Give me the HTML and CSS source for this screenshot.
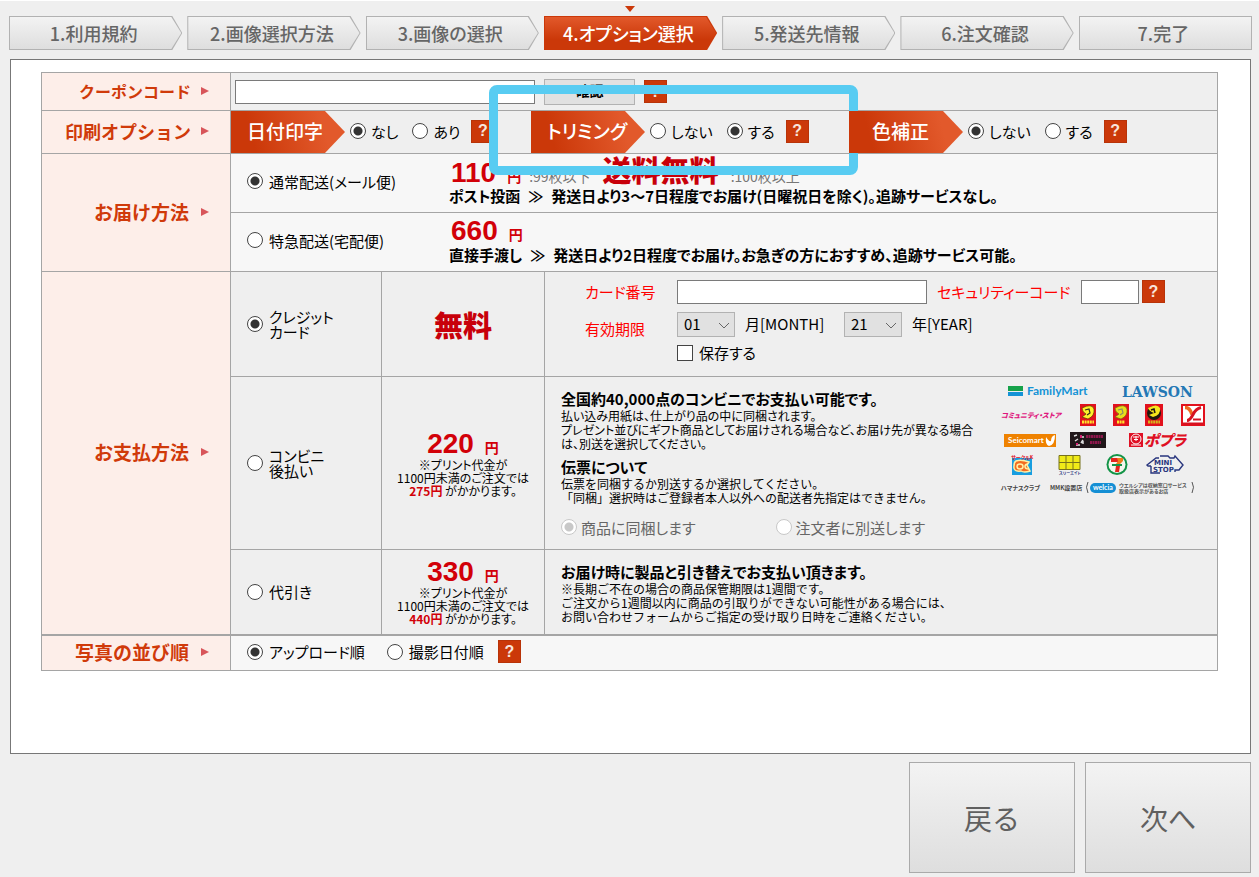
FILE: index.html
```html
<!DOCTYPE html>
<html lang="ja">
<head>
<meta charset="utf-8">
<title>オプション選択</title>
<link rel="stylesheet" href="styles.css">
</head>
<body>
<ol class="steps">
  <li class="step"><span>1.利用規約</span></li>
  <li class="step"><span>2.画像選択方法</span></li>
  <li class="step"><span>3.画像の選択</span></li>
  <li class="step-current"><svg class="marker" width="10" height="6" viewBox="0 0 10 6"><path d="M0 0H10L5 6Z"/></svg><div class="step active"><span>4.オプション選択</span></div></li>
  <li class="step"><span>5.発送先情報</span></li>
  <li class="step"><span>6.注文確認</span></li>
  <li class="step last"><span>7.完了</span></li>
</ol>

<form class="order">
<main class="panel">
<table class="options">
  <colgroup><col class="c-head"><col class="c-method"><col class="c-price"><col></colgroup>
  <tr class="r-coupon">
    <th scope="row"><div class="head small"><label for="coupon">クーポンコード</label><svg width="8" height="8" viewBox="0 0 8 8"><path d="M0 0L8 4L0 8Z"/></svg></div></th>
    <td colspan="3"><div class="coupon"><input type="text" class="field coupon-field" id="coupon"><button type="button" class="check">確認</button><button type="button" class="help">?</button></div></td>
  </tr>
  <tr class="r-print">
    <th scope="row"><div class="head medium">印刷オプション<svg width="8" height="8" viewBox="0 0 8 8"><path d="M0 0L8 4L0 8Z"/></svg></div></th>
    <td colspan="3"><div class="print">
      <div class="group"><span class="tag">日付印字</span>
        <label class="choice"><input type="radio" name="date" checked>なし</label>
        <label class="choice"><input type="radio" name="date">あり</label>
        <button type="button" class="help">?</button></div>
      <div class="group"><span class="tag">トリミング</span>
        <label class="choice"><input type="radio" name="trim">しない</label>
        <label class="choice"><input type="radio" name="trim" checked>する</label>
        <button type="button" class="help">?</button><div class="highlight"></div></div>
      <div class="group"><span class="tag short">色補正</span>
        <label class="choice"><input type="radio" name="color" checked>しない</label>
        <label class="choice"><input type="radio" name="color">する</label>
        <button type="button" class="help">?</button></div>
    </div></td>
  </tr>
  <tr class="r-ship light">
    <th scope="row" rowspan="2"><div class="head wide">お届け方法<svg width="8" height="8" viewBox="0 0 8 8"><path d="M0 0L8 4L0 8Z"/></svg></div></th>
    <td colspan="3"><div class="ship">
      <label class="choice"><input type="radio" name="ship" checked>通常配送(メール便)</label>
      <div class="ship-text">
        <p class="cost"><b class="num">110</b><b class="yen">円</b><span class="limit">:99枚以下</span><b class="free">送料無料</b><span class="limit">:100枚以上</span></p>
        <p class="term">ポスト投函<span class="arrows">≫</span>発送日より3～7日程度でお届け(日曜祝日を除く)。追跡サービスなし。</p>
      </div></div></td>
  </tr>
  <tr class="r-ship light">
    <td colspan="3"><div class="ship">
      <label class="choice"><input type="radio" name="ship">特急配送(宅配便)</label>
      <div class="ship-text">
        <p class="cost"><b class="num">660</b><b class="yen">円</b></p>
        <p class="term">直接手渡し<span class="arrows">≫</span>発送日より2日程度でお届け。お急ぎの方におすすめ、追跡サービス可能。</p>
      </div></div></td>
  </tr>
  <tr class="r-card">
    <th scope="row" rowspan="3"><div class="head wide">お支払方法<svg width="8" height="8" viewBox="0 0 8 8"><path d="M0 0L8 4L0 8Z"/></svg></div></th>
    <td class="method"><label class="choice"><input type="radio" name="pay" checked><span>クレジット<br>カード</span></label></td>
    <td class="price"><b class="free">無料</b></td>
    <td><div class="card">
      <label class="req" for="cardno">カード番号</label>
      <div class="line"><input type="text" class="field card-field" id="cardno"><label class="req code-label" for="code">セキュリティーコード</label><input type="text" class="field code-field" id="code"><button type="button" class="help">?</button></div>
      <span class="req expiry">有効期限</span>
      <div class="line dates">
        <span class="pick"><select id="month"><option>01</option></select><svg width="12" height="7" viewBox="0 0 12 7"><path d="M1 1L6 6L11 1"/></svg></span><label for="month" class="unit">月[MONTH]</label>
        <span class="pick"><select id="year"><option>21</option></select><svg width="12" height="7" viewBox="0 0 12 7"><path d="M1 1L6 6L11 1"/></svg></span><label for="year">年[YEAR]</label>
      </div>
      <label class="choice save"><input type="checkbox">保存する</label>
    </div></td>
  </tr>
  <tr class="r-store">
    <td class="method"><label class="choice"><input type="radio" name="pay"><span>コンビニ<br>後払い</span></label></td>
    <td class="price"><p><b class="num">220</b><b class="yen">円</b></p><p class="note">※プリント代金が<br>1100円未満のご注文では<br><b>275円</b> がかかります。</p></td>
    <td class="top"><div class="store">
      <div class="about">
        <h2>全国約40,000点のコンビニでお支払い可能です。</h2>
        <p>払い込み用紙は、仕上がり品の中に同梱されます。<br>プレゼント並びにギフト商品としてお届けされる場合など、お届け先が異なる場合は、別送を選択してください。</p>
        <h2>伝票について</h2>
        <p class="even">伝票を同梱するか別送するか選択してください。<br>「同梱」選択時はご登録者本人以外への配送者先指定はできません。</p>
        <div class="slip"><label class="choice"><input type="radio" name="slip" checked disabled>商品に同梱します</label><label class="choice"><input type="radio" name="slip" disabled>注文者に別送します</label></div>
      </div>
      <svg class="brands" width="205" height="112" viewBox="10 9 205 112" role="img" aria-label="取扱コンビニ">
        <path fill="#16a24a" d="M18 11h15v5H18z"/><path fill="#1493d6" d="M18 17h15v4H18z"/>
        <text class="family" x="37" y="20">FamilyMart</text>
        <text class="lawson" x="132" y="22">LAWSON</text>
        <text class="community" x="11" y="43">コミュニティ・ストア</text>
        <g><path fill="#e2111d" d="M90 29h16v22H90z"/><path fill="#fff02a" stroke="#5b3a00" stroke-width=".7" d="M92 33q10-5 12 1q1 7-6 10l-6-2l4-3q-4-2-4-6z"/><path d="M95 35l4-1l1 4l-3 2" fill="none" stroke="#34301c" stroke-width="1.200"/><path d="M92 47h12" stroke="#ffe32c" stroke-width="3" stroke-dasharray="2 .6"/></g>
        <g><path fill="#e2111d" d="M123 29h16v22h-16z"/><path fill="#e8df1b" stroke="#77670b" stroke-width=".7" d="M125 33q10-5 12 1q1 7-6 10l-6-2l4-3q-4-2-4-6z"/><path d="M128 35l4-1l1 4l-3 2" fill="none" stroke="#8c8b69" stroke-width="1.200"/><path d="M127 47h8" stroke="#ffe32c" stroke-width="3" stroke-dasharray="2 .6"/></g>
        <g><path fill="#e2111d" d="M155 29h18v22h-18z"/><circle cx="164" cy="38" r="7" fill="#21190e"/><path fill="#f5e61c" d="M158 33q9-5 12 0q1 7-7 9l-4-2l5-2q-5-2-6-5z"/><path d="M161 35l3-1l1 4" fill="none" stroke="#21190e" stroke-width="1.500"/><path d="M158 47h12" stroke="#d6b51d" stroke-width="3" stroke-dasharray="2 .6"/></g>
        <path fill="#fff" stroke="#e2111d" stroke-width="2" d="M192 30h22v20h-22z"/><path d="M195 32.500q5 0 7 7" fill="none" stroke="#ef6b20" stroke-width="3.500"/><path d="M211 32.500q-5 1-8 7t-6 6" fill="none" stroke="#d61220" stroke-width="3"/><path d="M203 44.500h8" stroke="#d61220" stroke-width="2"/><path d="M193 48.500h20" stroke="#d61220" stroke-width="2"/>
        <path fill="#ef8200" d="M14 59h52v13H14z"/><text class="seico" x="18" y="68">Seicomart</text><path fill="#fff" d="M56 62q3 5 5 4q0-5 4-6q0 10-6 11q-4-1-3-9z"/>
        <path fill="#20171a" d="M80 57h36v16H80z"/><path d="M84 61l3-1m3 2h4m-9 4l3-2m5 1l-2 3m-5 2h4m3-4v3" stroke="#ddd" stroke-width="1.500"/><path d="M91 60v3m-5 6h2" stroke="#d52171" stroke-width="2"/><path d="M96 61.500h17M100 67.500h11" stroke="#8e174c" stroke-width="3" stroke-dasharray="2 .5"/>
        <path fill="#df1024" d="M139 58h14v14h-14z"/><circle cx="146" cy="64" r="5" fill="none" stroke="#fff"/><path d="M143 62h6m-5 2.500h4M146 61v5m-5 4h10" stroke="#fff"/><text class="poplar" x="154" y="71">ポプラ</text>
        <path fill="#189ee0" d="M22 83h20v17H22z"/><text class="circle-top" x="21" y="84">サークルK</text><path fill="#f36b20" stroke="#fff1a6" stroke-width="1.500" d="M26 86q5-2 13 1l-2 3l3 6q-6 2-9 0q-8 1-7-5q0-4 2-5z"/><path d="M30 89q-3 0-3 2.500t3 2.500q3 0 3-2.500t-3-2.500m8 0q-3 0-3 2.500t4 2.500" fill="none" stroke="#fff1a6" stroke-width="1.500"/>
        <path fill="#efea18" stroke="#77721c" d="M69 80.500h21v14H69zM76 80.500v14M83 80.500v14M69 87.500h21"/><text class="three" x="69" y="99.500">スリーエイト</text>
        <circle cx="127" cy="89.500" r="10.500" fill="#139447"/><circle cx="127" cy="89.500" r="8.500" fill="#f5f5ed"/><path fill="#e5241e" d="M121 83h7v4h-7z"/><path fill="#ef7b1b" d="M127 83h6v3l-3 3h-4l2-3z"/><path fill="#139447" d="M122 89h10v2h-10z"/><path fill="#e5241e" d="M126 91h4l-1 6h-4z"/>
        <path fill="none" stroke="#29367e" stroke-width="1.400" d="M161 91h-3l-1-1l9-7h3M170 81h8l2 2h4l1-2l8 9-4 5h-4v2M161 91v7h9"/><text class="mini" x="164" y="90">MINI</text><text class="mini" x="163" y="97">STOP</text>
        <text class="tiny" x="11" y="115">ハマナスクラブ</text><text class="tiny" x="60" y="115">MMK設置店</text><path d="M98 107q-3 5 0 11M202 107q3 5 0 11" fill="none" stroke="#555"/><rect x="100" y="108" width="26" height="10" rx="5" fill="#158fd4"/><text class="welcia" x="103" y="115">welcia</text><text class="fine" x="129" y="112">ウエルシアは収納窓口サービス</text><text class="fine" x="129" y="117.500">取扱店表示があるお店</text>
      </svg>
    </div></td>
  </tr>
  <tr class="r-cod">
    <td class="method"><label class="choice"><input type="radio" name="pay">代引き</label></td>
    <td class="price"><p><b class="num">330</b><b class="yen">円</b></p><p class="note">※プリント代金が<br>1100円未満のご注文では<br><b>440円</b> がかかります。</p></td>
    <td><div class="about cod">
      <h2>お届け時に製品と引き替えでお支払い頂きます。</h2>
      <p class="even">※長期ご不在の場合の商品保管期限は1週間です。<br>ご注文から1週間以内に商品の引取りができない可能性がある場合には、<br>お問い合わせフォームからご指定の受け取り日時をご連絡ください。</p>
    </div></td>
  </tr>
  <tr class="r-sort light">
    <th scope="row"><div class="head wide">写真の並び順<svg width="8" height="8" viewBox="0 0 8 8"><path d="M0 0L8 4L0 8Z"/></svg></div></th>
    <td colspan="3"><div class="sort">
      <label class="choice"><input type="radio" name="sort" checked>アップロード順</label>
      <label class="choice"><input type="radio" name="sort">撮影日付順</label>
      <button type="button" class="help">?</button></div></td>
  </tr>
</table>
</main>
<div class="actions"><button type="button">戻る</button><button type="button">次へ</button></div>
</form>
</body>
</html>
```
FILE: styles.css
```css
* { box-sizing: border-box; }

body {
  margin: 0;
  background: #efefef;
  color: #000;
  font: 15px/16px "Noto Sans CJK JP", sans-serif;
}

p, h2, ol { margin: 0; padding: 0; }

button, input, select { font: inherit; margin: 0; border-radius: 0; }

/* Progress steps */
.steps {
  display: flex;
  gap: 5px;
  padding: 15px 7px 9px 9px;
  border-top: 1px solid #fff;
  list-style: none;
}

.step, .step-current { flex: 1; }

.step-current { position: relative; }

.step {
  --tip: polygon(0 0, calc(100% - 10px) 0, 100% 50%, calc(100% - 10px) 100%, 0 100%);
  display: grid;
  place-items: center;
  position: relative;
  height: 34px;
  background: #b2b2b2;
  clip-path: var(--tip);
  color: #666;
  font-size: 18px;
  font-weight: 500;
  font-feature-settings: "palt";
}

.step::before {
  content: "";
  position: absolute;
  inset: 1px;
  background: linear-gradient(#f3f3f3, #dedede);
  clip-path: var(--tip);
}

.step span { position: relative; padding-right: 4px; }

.step.last { --tip: none; }

.step.active { background: #cb3809; color: #fff; }

.step.active::before { background: linear-gradient(#e2592b, #cb3809 70%); }

.marker {
  position: absolute;
  left: calc(50% - 5px);
  top: -10px;
  fill: #cb3809;
}

/* Main panel */
.panel {
  margin: 0 8px 0 10px;
  padding: 12px 32px 82px 30px;
  background: #fff;
  border: 1px solid #777;
}

.options {
  width: 100%;
  table-layout: fixed;
  border-collapse: collapse;
  background: #efefef;
}

.c-head { width: 189px; }
.c-method { width: 151px; }
.c-price { width: 163px; }

.r-coupon { height: 38px; }
.r-print { height: 43px; }
.r-ship { height: 59px; }
.r-card { height: 105px; }
.r-store { height: 173px; }
.r-cod { height: 85px; }
.r-sort { height: 36px; border-top: 2px solid #a5a5a5; }

th, td { padding: 0; border: 1px solid #a5a5a5; text-align: left; }

th { background: #fdeee9; }

.light td { background: #f7f7f7; }

td.top { vertical-align: top; }

.head {
  display: flex;
  justify-content: flex-end;
  align-items: center;
  gap: 10px;
  padding: 0 21px 2px 0;
  color: #d03a0a;
  font-size: 19px;
  font-weight: 700;
  line-height: 20px;
}

.head.small { font-size: 16px; }
.head.medium { font-size: 18px; }
.head.wide { gap: 12px; }
.head svg { fill: #d8555a; }

/* Controls */
.field { border: 1px solid #7a7a7a; background: #fff; height: 24px; padding: 0 4px; }

.help {
  width: 23px;
  height: 23px;
  padding: 0;
  border: 1px solid #b83308;
  background: #cb3809;
  color: #f8e4dc;
  font: bold 16px/20px "Liberation Sans", sans-serif;
}

.choice {
  display: flex;
  align-items: center;
  gap: 6px;
  line-height: 15px;
  font-feature-settings: "palt";
  white-space: nowrap;
}

input[type="radio"], input[type="checkbox"] {
  appearance: none;
  flex: none;
  width: 16px;
  height: 16px;
  border: 1px solid #444;
  background: #fff;
}

input[type="radio"] { border-radius: 50%; }

input[type="radio"]:checked { background: radial-gradient(circle, #333 4px, #fff 5px); }

input[type="radio"]:disabled { border-color: #c8c8c8; }

input[type="radio"]:disabled:checked { background: radial-gradient(circle, #c8c8c8 4px, #fff 5px); }

.coupon { display: flex; align-items: center; padding-left: 4px; }

.coupon-field { width: 300px; }

.check {
  width: 91px;
  height: 26px;
  margin: 0 9px;
  padding: 0 0 3px;
  border: 1px solid #b2b2b2;
  background: #e1e1e1;
  font-size: 14px;
  font-weight: 700;
}

.print { display: grid; grid-template-columns: 300px 318px 1fr; }

.group { display: flex; align-items: center; position: relative; }

.group .choice { gap: 5px; margin: 0 14px 2px 0; }

.group .help { margin: 0 0 2px -3px; }

.tag {
  width: 114px;
  height: 42px;
  margin-right: 5px;
  padding-left: 16px;
  background: linear-gradient(75deg, #cb3809 20%, #e2592b 80%);
  clip-path: polygon(0 0, calc(100% - 20px) 0, 100% 50%, calc(100% - 20px) 100%, 0 100%);
  color: #fff;
  font-size: 19px;
  font-weight: 500;
  line-height: 40px;
  font-feature-settings: "palt";
}

.tag.short { padding-left: 23px; }

.highlight {
  position: absolute;
  left: -42px;
  top: -26px;
  width: 369px;
  height: 90px;
  border: 9px solid #58ccf2;
  border-radius: 8px;
  pointer-events: none;
}

/* Delivery */
.ship { display: grid; grid-template-columns: 202px 1fr; align-items: center; padding: 0 0 4px 16px; }

.cost, .price p { display: flex; align-items: baseline; }

.cost { height: 28px; margin-bottom: 2px; padding-left: 2px; line-height: 28px; }

.num { color: #d20008; font: bold 28px/28px "Liberation Sans", sans-serif; }

.yen { margin-left: 11px; color: #d20008; font-size: 14px; }

.free { color: #c8000a; font-size: 29px; line-height: 28px; font-weight: 900; }

.limit { margin-left: 8px; color: #777; font-size: 14px; }

.cost .free { margin-left: 12px; line-height: 22px; }

.free + .limit { margin-left: 12px; }

.term {
  font-weight: 700;
  line-height: 16px;
  font-feature-settings: "palt";
}

.arrows { margin: 0 8px; }

/* Payment */
.method { padding-left: 16px; }

.price { text-align: center; }

.price p { justify-content: center; }

.price .note { display: block; font-size: 12px; line-height: 13px; font-feature-settings: "palt"; }

.note b { color: #d20008; }

.card {
  display: grid;
  grid-template-columns: 92px 1fr;
  row-gap: 8px;
  padding: 0 16px 8px 40px;
  font-feature-settings: "palt";
}

.req { color: #f00; align-self: center; }

.expiry { align-self: end; }

.line { display: flex; align-items: center; }

.card-field { width: 250px; }
.code-label { width: 134px; margin: 0 0 0 10px; }
.code-field { width: 58px; margin: 0 3px 0 10px; }

.pick { position: relative; margin-right: 10px; }

.pick select {
  appearance: none;
  display: block;
  width: 58px;
  height: 25px;
  padding: 0 6px;
  border: 1px solid #b2b2b2;
  background: #e1e1e1;
}

.pick svg { position: absolute; right: 5px; top: 10px; fill: none; stroke: #666; pointer-events: none; }

.unit { width: 89px; margin-right: 10px; }

.save { grid-column: 2; }

.store { display: flex; gap: 11px; align-items: flex-start; padding: 7px 10px 0 16px; }

.about { flex: 0 1 428px; padding-top: 6px; }

.about.cod { padding: 4px 0 0 16px; }

.about h2 {
  margin-bottom: 2px;
  font-size: 15px;
  line-height: 17px;
  font-weight: 700;
  font-feature-settings: "palt";
}

.about p { font-size: 12px; line-height: 14px; font-feature-settings: "palt"; }

.about p.even { font-feature-settings: normal; }

.about p + h2 { margin-top: 7px; }

.slip { display: flex; gap: 80px; margin-top: 14px; color: #666; }

.slip .choice { gap: 4px; }

/* Convenience store logos */
.brands { flex: none; }
.brands text { font-family: "Noto Sans CJK JP", sans-serif; font-weight: 700; font-feature-settings: "palt"; }
.brands .family { font: bold 12px Lato, sans-serif; fill: #1493d6; }
.brands .lawson { font: bold 14px "DejaVu Serif", serif; fill: #2478b5; }
.brands .community { font-size: 7px; font-style: italic; font-weight: 900; fill: #df167d; }
.brands .seico { font: bold 8px Lato, sans-serif; fill: #fff; }
.brands .poplar { font-size: 15px; font-style: italic; font-weight: 900; fill: #df1024; }
.brands .circle-top { font-size: 5px; fill: #df1024; }
.brands .three { font-size: 4px; fill: #29367e; }
.brands .mini { font: bold 7px "DejaVu Sans", sans-serif; fill: #29367e; }
.brands .tiny { font-size: 6px; fill: #444; }
.brands .welcia { font: bold 7px Lato, sans-serif; fill: #fff; }
.brands .fine { font-size: 5px; fill: #555; }

.sort { display: flex; align-items: center; padding: 0 0 2px 16px; }

.sort .choice { margin-right: 22px; }

.sort .choice + .choice { margin-right: 14px; }

/* Navigation */
.actions { display: flex; justify-content: flex-end; gap: 10px; padding: 8px 8px 5px; }

.actions button {
  width: 166px;
  height: 111px;
  border: 1px solid #aaa;
  background: linear-gradient(#f3f3f3, #dedede);
  color: #606060;
  font-size: 28px;
}
```
